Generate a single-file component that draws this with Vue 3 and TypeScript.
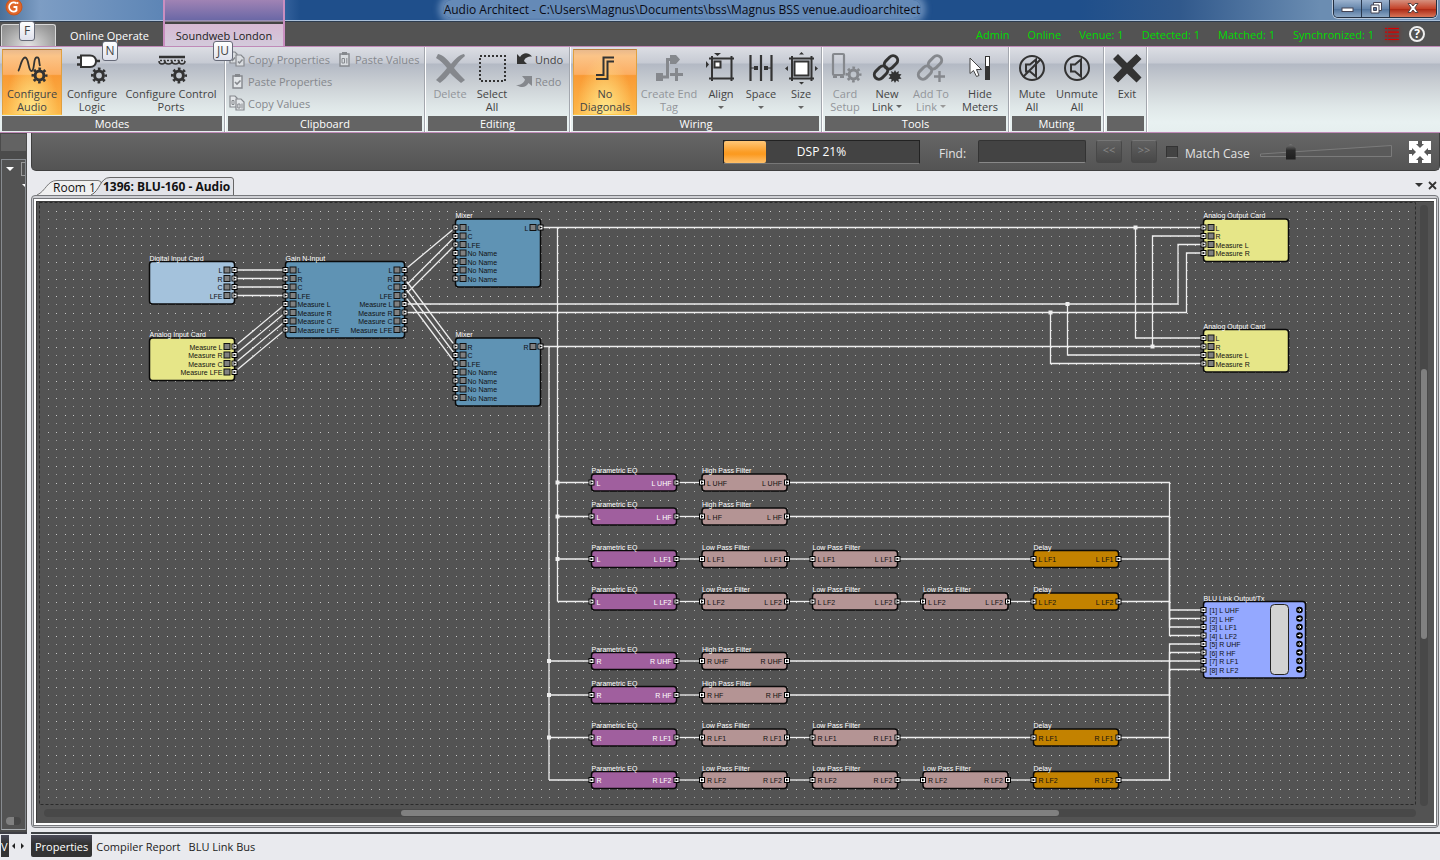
<script setup lang="ts">
import { ref } from 'vue'

interface BigTool { id: string; lines: string[]; w: string; icon: string; off?: boolean; on?: boolean; caret?: 'below' | 'inline' }

const gear = (cx: number, cy: number) =>
  `<g fill="none" stroke="currentColor"><circle cx="${cx}" cy="${cy}" r="4.4" stroke-width="3"/><circle cx="${cx}" cy="${cy}" r="6.7" stroke-width="2.6" stroke-dasharray="2.63 2.63" stroke-dashoffset="1.3"/></g>`
const chain =
  '<g fill="none" stroke="currentColor" stroke-width="3"><rect x="-4.6" y="-7.5" width="9.2" height="15" rx="4.6" transform="translate(20 10.3) rotate(45)"/><rect x="-4.6" y="-7.5" width="9.2" height="15" rx="4.6" transform="translate(10 20.6) rotate(45)"/></g>'
const frame =
  '<path d="M4 6.5H29M4 26.500H29M7 4V29M26.500 4V29" stroke="currentColor" stroke-width="2" fill="none"/>'

const icons: Record<string, string> = {
  audio: '<path d="M2 19C4 18 5 6 9 5.500S12 19 15.500 19 17 6 20.500 5.500 22.500 9 24 14" fill="none" stroke="currentColor" stroke-width="1.800"/>' + gear(23.5, 23.5),
  logic: '<path d="M1 5.500H6M1 12.500H6M18 9H24" stroke="currentColor" stroke-width="2.500"/><path d="M5 3.500H14C22 3.500 22 15 14 15H5Z" fill="#fff" stroke="currentColor" stroke-width="2"/>' + gear(23, 23.5),
  ports: '<path d="M4 5H30" stroke="currentColor" stroke-width="2.500"/><path d="M4 9q0 3 3 3t3-3q0 3 3.500 3t3.500-3q0 3 3.500 3t3.500-3q0 3 3 3t3-3" fill="none" stroke="currentColor" stroke-width="1.500"/><path d="M5 8.500H30" stroke="currentColor" stroke-width="1.500" stroke-dasharray="2 1.500"/>' + gear(24, 23.5),
  del: '<path d="M4 2C9 3 13 7 17 12 21 7 25 3 30 2L31 4C26 8 23 12 20 16 23 20 27 24 31 28L27 31C23 28 19 24 16 21 13 25 10 28 6 31L2 28C6 24 10 20 13 16 10 12 7 9 2 6Z" fill="currentColor"/>',
  select: '<rect x="4" y="4" width="25" height="25" fill="none" stroke="currentColor" stroke-width="2" stroke-dasharray="2 2"/>',
  nodiag: '<path d="M25 5.500H14.500V23H7M25 9.500H18.500V27H7" fill="none" stroke="currentColor" stroke-width="2"/>',
  endtag: '<path d="M3 21H10V29H3ZM17 3H23L27 7.500 23 12H17Z" fill="currentColor"/><path d="M9 25H14.500V7.500H18M17 22.500H30M23.500 16V29" fill="none" stroke="currentColor" stroke-width="3"/>',
  align: frame + '<rect x="9.500" y="9.500" width="6" height="6" fill="#fff" stroke="currentColor" stroke-width="2"/><path d="M9 1H16L12.500 4ZM1 9V16L4 12.500Z" fill="currentColor"/>',
  space: '<path d="M5.500 3V29M16 3V29M26.500 3V29" stroke="currentColor" stroke-width="2.200"/><path d="M9 14H13V18H9ZM19 14H23V18H19Z" fill="currentColor"/><path d="M6 16H9M23 16H26" stroke="currentColor"/>',
  size: frame + '<rect x="9.500" y="9.500" width="14" height="14" fill="#fff" stroke="currentColor" stroke-width="2"/><path d="M14 2.500L16.500 0 19 2.500ZM14 30L16.500 32.500 19 30ZM3 14L0 16.500 3 19ZM30 14L33 16.500 30 19Z" fill="currentColor"/>',
  card: '<rect x="4" y="2" width="11" height="21" rx="1" fill="none" stroke="currentColor" stroke-width="2.200"/><path d="M4 25H8M11 25H15" stroke="currentColor" stroke-width="2"/>' + gear(24.5, 22.5),
  newlink: chain + '<path d="M24 18l1.300 2.500 2.500-1.500-.3 3 3 .3-1.800 2.200 1.800 2.200-3 .3.300 3-2.500-1.500L24 31l-1.300-2.500-2.500 1.500.3-3-3-.3 1.800-2.200-1.800-2.200 3-.3-.3-3 2.500 1.500Z" fill="currentColor"/>',
  addlink: chain + '<path d="M19 24.500H30M24.500 19V30" stroke="currentColor" stroke-width="2.400"/>',
  meters: '<path d="M6 6V21.500L9.500 18.500 12.500 24.500 15 23.500 12.500 17.500H17.500Z" fill="#fff" stroke="#444" stroke-width="1"/><rect x="21.500" y="4.500" width="4" height="23" fill="#333" stroke="#333"/><rect x="22" y="5" width="3" height="9" fill="#fff"/>',
  mute: '<g fill="none" stroke="currentColor" stroke-width="2"><circle cx="16" cy="16" r="12"/><path d="M10 12.500H14L20 7.500V24.500L14 19.500H10ZM25 7L7 25"/></g>',
  unmute: '<g fill="none" stroke="currentColor" stroke-width="2"><circle cx="16" cy="16" r="12"/><path d="M10 12.500H14L20 7.500V24.500L14 19.500H10Z"/></g>',
  exit: '<path d="M2 7L7 2 16 11 25.500 2 30.500 7 21.500 16 30.500 25.500 25.500 30.500 16 21.500 7 30.500 2 25.500 11 16Z" fill="currentColor"/>',
}

const smallIcons: Record<string, string> = {
  copyprops: '<g fill="#d9dce0" stroke="currentColor" stroke-width="1.200"><path d="M1 1H6L8 3V12H1Z"/><path d="M7 4H12L15 7V15H7Z"/></g><path d="M9 10.500L10.500 12 13.500 8.500M2 8L3.500 9.500 6 6.500" fill="none" stroke="currentColor" stroke-width="1.500"/>',
  pasteprops: '<path d="M4 3H13V15H4Z" fill="#e3e6e9" stroke="currentColor" stroke-width="1.400"/><path d="M6 1H11V4H6Z" fill="currentColor"/><path d="M6 9L8 11 11.500 7.500" fill="none" stroke="currentColor" stroke-width="1.600"/>',
  copyvals: '<g fill="#e3e6e9" stroke="currentColor" stroke-width="1.200"><path d="M1 1H6L8 3V12H1Z"/><path d="M7 4H12L15 7V15H7Z"/></g><path d="M3 5.500H5V9.500H3ZM8.800 9H11V13H8.800ZM13 8.500V13.500" fill="none" stroke="currentColor" stroke-width="1"/>',
  pastevals: '<path d="M4 3H13V15H4Z" fill="#d9dce0" stroke="currentColor" stroke-width="1.400"/><path d="M6 1H11V4H6Z" fill="currentColor"/><path d="M6 7.500H8.500V12H6ZM10.800 7V12.500" fill="none" stroke="currentColor" stroke-width="1"/>',
  undo: '<path d="M1 3V13H11L8 10C9 7 11 5.500 16 5.500 12 1 7 1.500 4 6Z" fill="currentColor"/>',
  redo: '<path d="M16 3V13L12.500 10C10 15 5 15 0 12 5 12 8 10 9 6.500L6 3Z" fill="currentColor"/>',
}

const groups: { name: string; tools: BigTool[] }[] = [
  { name: 'Modes', tools: [
    { id: 'ca', lines: ['Configure', 'Audio'], w: 'w60', icon: 'audio', on: true },
    { id: 'cl', lines: ['Configure', 'Logic'], w: 'w60', icon: 'logic' },
    { id: 'cp', lines: ['Configure Control', 'Ports'], w: 'w98', icon: 'ports' } ] },
  { name: 'Clipboard', tools: [] },
  { name: 'Editing', tools: [
    { id: 'de', lines: ['Delete'], w: 'w44', icon: 'del', off: true },
    { id: 'sa', lines: ['Select', 'All'], w: 'w40', icon: 'select' } ] },
  { name: 'Wiring', tools: [
    { id: 'nd', lines: ['No', 'Diagonals'], w: 'w64', icon: 'nodiag', on: true },
    { id: 'ce', lines: ['Create End', 'Tag'], w: 'w64', icon: 'endtag', off: true },
    { id: 'al', lines: ['Align'], w: 'w40', icon: 'align', caret: 'below' },
    { id: 'sp', lines: ['Space'], w: 'w40', icon: 'space', caret: 'below' },
    { id: 'si', lines: ['Size'], w: 'w40', icon: 'size', caret: 'below' } ] },
  { name: 'Tools', tools: [
    { id: 'cs', lines: ['Card', 'Setup'], w: 'w40', icon: 'card', off: true },
    { id: 'nl', lines: ['New', 'Link'], w: 'w44', icon: 'newlink', caret: 'inline' },
    { id: 'at', lines: ['Add To', 'Link'], w: 'w44', icon: 'addlink', off: true, caret: 'inline' },
    { id: 'hm', lines: ['Hide', 'Meters'], w: 'w54', icon: 'meters' } ] },
  { name: 'Muting', tools: [
    { id: 'ma', lines: ['Mute', 'All'], w: 'w40', icon: 'mute' },
    { id: 'ua', lines: ['Unmute', 'All'], w: 'w50', icon: 'unmute' } ] },
  { name: '', tools: [{ id: 'ex', lines: ['Exit'], w: 'w40', icon: 'exit' }] },
]

const status = ['Admin', 'Online', 'Venue: 1', 'Detected: 1', 'Matched: 1', 'Synchronized: 1']
const find = ref('')
const matchCase = ref(false)
const zoomLevel = ref(21)

/* Schematic: every position is a whole number of grid cells. */
const CELL = 8.5
const g = (n: number) => n * CELL

interface Block { t: string; x: number; y: number; w: number; h: number; c: string; ins: string[]; outs: string[]; meters?: boolean; link?: boolean; light?: boolean }

const BLUE = '#5f93b4', YELLOW = '#e6e688', PURPLE = '#a05f9e', ROSE = '#b49494', AMBER = '#c38200'
const four = ['L', 'R', 'C', 'LFE']
const meas = ['Measure L', 'Measure R', 'Measure C', 'Measure LFE']
const none = ['No Name', 'No Name', 'No Name', 'No Name']

const blocks: Block[] = [
  { t: 'Digital Input Card', x: 13, y: 7, w: 10, h: 5, c: '#a4c2dc', ins: [], outs: four, meters: true },
  { t: 'Analog Input Card', x: 13, y: 16, w: 10, h: 5, c: YELLOW, ins: [], outs: meas, meters: true },
  { t: 'Gain N-Input', x: 29, y: 7, w: 14, h: 9, c: BLUE, ins: [...four, ...meas], outs: [...four, ...meas], meters: true },
  { t: 'Mixer', x: 49, y: 2, w: 10, h: 8, c: BLUE, ins: ['L', 'C', 'LFE', ...none], outs: ['L'], meters: true },
  { t: 'Mixer', x: 49, y: 16, w: 10, h: 8, c: BLUE, ins: ['R', 'C', 'LFE', ...none], outs: ['R'], meters: true },
  { t: 'Analog Output Card', x: 137, y: 2, w: 10, h: 5, c: YELLOW, ins: ['L', 'R', 'Measure L', 'Measure R'], outs: [], meters: true },
  { t: 'Analog Output Card', x: 137, y: 15, w: 10, h: 5, c: YELLOW, ins: ['L', 'R', 'Measure L', 'Measure R'], outs: [], meters: true },
  { t: 'BLU Link Output/Tx', x: 137, y: 47, w: 12, h: 9, c: '#94a8ff', outs: [], link: true,
    ins: ['[1] L UHF', '[2] L HF', '[3] L LF1', '[4] L LF2', '[5] R UHF', '[6] R HF', '[7] R LF1', '[8] R LF2'] },
]

const wires: number[][] = []
const joints: number[][] = []

const chains: { side: string; band: string; y: number; cols: [string, number][] }[] = []
const rows: [string, string, number][] = [
  ['L', 'UHF', 33], ['L', 'HF', 37], ['L', 'LF1', 42], ['L', 'LF2', 47],
  ['R', 'UHF', 54], ['R', 'HF', 58], ['R', 'LF1', 63], ['R', 'LF2', 68],
]
rows.forEach(([side, band, y]) => {
  const cols: [string, number][] = [['Parametric EQ', 65]]
  if (band.startsWith('L')) {
    cols.push(['Low Pass Filter', 78], ['Low Pass Filter', 91])
    if (band === 'LF2') cols.push(['Low Pass Filter', 104])
    cols.push(['Delay', 117])
  } else cols.push(['High Pass Filter', 78])
  chains.push({ side, band, y, cols })
})
chains.forEach(({ side, band, y, cols }, i) => {
  const name = `${side} ${band}`
  cols.forEach(([t, x], k) => {
    const eq = k === 0
    blocks.push({ t, x, y: y - 1, w: 10, h: 2, c: eq ? PURPLE : t === 'Delay' ? AMBER : ROSE, ins: [eq ? side : name], outs: [name], light: eq })
    if (k) wires.push([cols[k - 1][1] + 10, y, x, y])
  })
  wires.push([cols[cols.length - 1][1] + 10, y, 133, y, 133, 48 + i, 137, 48 + i])
  const bus = side === 'L' ? 61 : 60
  wires.push([bus, y, 65, y])
  if (band !== 'LF2') joints.push([bus, y])
})
for (let i = 0; i < 4; i++) {
  wires.push([23, 8 + i, 29, 8 + i])
  wires.push([23, 17 + i, 29, 12 + i])
}
wires.push([43, 8, 49, 3], [43, 10, 49, 4], [43, 11, 49, 5], [43, 9, 49, 17], [43, 10, 49, 18], [43, 11, 49, 19])
wires.push([59, 3, 137, 3], [129, 3, 129, 16, 137, 16], [59, 17, 137, 17], [131, 17, 131, 4, 137, 4])
wires.push([43, 12, 134, 12, 134, 5, 137, 5], [121, 12, 121, 18, 137, 18])
wires.push([43, 13, 135, 13, 135, 6, 137, 6], [119, 13, 119, 19, 137, 19])
wires.push([61, 3, 61, 47], [60, 17, 60, 68])
joints.push([129, 3], [131, 17], [121, 12], [119, 13])

const line = (p: number[]) => {
  const out: string[] = []
  for (let i = 0; i < p.length; i += 2) out.push(`${g(p[i])},${g(p[i + 1])}`)
  return out.join(' ')
}
</script>

<template>
  <div class="app">
    <header class="titlebar">
      <svg class="logo" viewBox="0 0 18 18" aria-hidden="true">
        <circle cx="9" cy="8" r="8" fill="#e0662a" stroke="#c9551c" />
        <path d="M11.500 4.500A4.500 4.500 0 1 0 11.500 11.500V8H8.500" fill="none" stroke="#fff" stroke-width="1.800" />
        <circle cx="12.500" cy="4" r="1" fill="#fff" />
      </svg>
      <h1>Audio Architect - C:\Users\Magnus\Documents\bss\Magnus BSS venue.audioarchitect</h1>
      <div class="winbtns">
        <button aria-label="Minimize"><svg viewBox="0 0 16 14"><rect x="2" y="7" width="11" height="3.500" fill="#fff" stroke="#445" /></svg></button>
        <button aria-label="Restore"><svg viewBox="0 0 16 14"><path d="M5.500 1.500H13.500V9.500H5.500Z" fill="#fff" stroke="#445" /><path d="M3 4H11V12H3Z" fill="#fff" stroke="#445" /><path d="M5.500 6.500H8.500V9.500H5.500Z" fill="#5577a0" stroke="#445" /></svg></button>
        <button class="close" aria-label="Close"><svg viewBox="0 0 16 14"><path d="M3 2.500H6L8 5 10 2.500H13L9.800 7 13 11.500H10L8 9 6 11.500H3L6.200 7Z" fill="#fff" stroke="#544" /></svg></button>
      </div>
    </header>

    <nav class="tabs">
      <button class="file" aria-label="File"></button>
      <button class="tab">Online Operate</button>
      <button class="tab ctx">Soundweb London</button>
      <div class="status">
        <span v-for="s in status" :key="s">{{ s }}</span>
        <svg class="list" viewBox="0 0 16 16" aria-hidden="true"><path d="M1 2.500H3M4 2.500H15M1 6.200H3M4 6.200H15M1 10H3M4 10H15M1 13.500H3M4 13.500H15" stroke="#d80000" stroke-width="1.200" /></svg>
        <button class="help" aria-label="Help">?</button>
      </div>
      <kbd class="tip tip-f">F</kbd>
      <kbd class="tip tip-n">N</kbd>
      <kbd class="tip tip-ju">JU</kbd>
    </nav>

    <section class="ribbon">
      <div v-for="grp in groups" :key="grp.name" class="group">
        <div class="tools">
          <button v-for="b in grp.tools" :key="b.id" class="big" :class="[b.w, { on: b.on }]" :disabled="b.off">
            <svg viewBox="0 0 32 32" aria-hidden="true" v-html="icons[b.icon]"></svg>
            <span v-for="(l, i) in b.lines" :key="l" class="ln">{{ l }}<i v-if="b.caret === 'inline' && i === 1" class="caret"></i></span>
            <i v-if="b.caret === 'below'" class="caret below"></i>
          </button>
          <template v-if="grp.name === 'Clipboard'">
            <div class="stack clip">
              <button class="small" disabled><svg viewBox="0 0 16 16" v-html="smallIcons.copyprops"></svg>Copy Properties</button>
              <button class="small" disabled><svg viewBox="0 0 16 16" v-html="smallIcons.pasteprops"></svg>Paste Properties</button>
              <button class="small" disabled><svg viewBox="0 0 16 16" v-html="smallIcons.copyvals"></svg>Copy Values</button>
            </div>
            <div class="stack">
              <button class="small" disabled><svg viewBox="0 0 16 16" v-html="smallIcons.pastevals"></svg>Paste Values</button>
            </div>
          </template>
          <div v-if="grp.name === 'Editing'" class="stack edit">
            <button class="small"><svg viewBox="0 0 16 16" v-html="smallIcons.undo"></svg>Undo</button>
            <button class="small" disabled><svg viewBox="0 0 16 16" v-html="smallIcons.redo"></svg>Redo</button>
          </div>
        </div>
        <h2>{{ grp.name }}</h2>
      </div>
    </section>

    <main class="body">
      <aside class="side">
        <div class="side-head"></div>
        <div class="tree">
          <div class="node"><i class="tri"></i><i class="doc"></i></div>
          <i class="tri sub"></i>
          <div class="knob"></div>
        </div>
      </aside>

      <div class="work">
        <div class="findbar">
          <div class="dsp" role="progressbar" aria-valuenow="21"><div class="fill"></div><span>DSP 21%</span></div>
          <label for="find">Find:</label>
          <input id="find" v-model="find" type="text" class="findbox" />
          <button class="step">&lt;&lt;</button>
          <button class="step">&gt;&gt;</button>
          <input id="mc" v-model="matchCase" type="checkbox" class="check" />
          <label for="mc" class="mc">Match Case</label>
          <div class="slider">
            <svg viewBox="0 0 132 14" aria-hidden="true"><path d="M.5 10L131.500 1.500V12.500H.5Z" fill="#5a5a5a" stroke="#7b7b7b" /></svg>
            <input v-model="zoomLevel" type="range" min="0" max="100" aria-label="Zoom" />
          </div>
          <button class="fit" aria-label="Fit to window">
            <svg viewBox="0 0 22 22"><path d="M0 0H22V22H0Z" fill="#fff" /><path d="M9 0H13V3H15L11 7 7 3H9ZM9 22H13V19H15L11 15 7 19H9ZM0 9V13H3V15L7 11 3 7V9ZM22 9V13H19V15L15 11 19 7V9Z" fill="#585858" /></svg>
          </button>
        </div>

        <div class="doctabs">
          <button class="dt room"><svg viewBox="0 0 66 15" aria-hidden="true"><path d="M0 15C9 11 10 .5 20 .5H61Q64.500 .5 64.500 4V15" fill="#f0f0f0" stroke="#777" /></svg><span>Room 1</span></button>
          <button class="dt cur"><svg viewBox="0 0 144 18" aria-hidden="true"><path d="M0 18C9 14 9 .5 19 .5H140Q142.500 .5 142.500 3V18" fill="#e2e3e8" stroke="#666" /></svg><span>1396: BLU-160 - Audio</span></button>
          <div class="dtend">
            <button aria-label="Tab list"><i class="tri dark"></i></button>
            <button aria-label="Close tab"><svg viewBox="0 0 9 9"><path d="M1 1L8 8M8 1L1 8" stroke="#333" stroke-width="1.800" /></svg></button>
          </div>
        </div>

        <div class="frame">
          <div class="canvas">
            <svg class="plan" width="1378" height="604" role="img" aria-label="Signal flow">
              <defs>
                <pattern id="dots" width="17" height="17" patternUnits="userSpaceOnUse">
                  <path d="M0 0h1v1h-1zM9 0h1v1h-1z" fill="#a4a4a4" />
                  <path d="M0 9h1v1h-1zM9 9h1v1h-1z" fill="#c8c8c8" />
                </pattern>
              </defs>
              <rect x="4" y="4" width="1370" height="596" fill="url(#dots)" />
              <rect x=".5" y=".5" width="1376" height="602" class="edge" />
              <polyline v-for="(w, i) in wires" :key="'w' + i" :points="line(w)" class="wire" />
              <rect v-for="(j, i) in joints" :key="'j' + i" :x="g(j[0]) - 2" :y="g(j[1]) - 2" width="4" height="4" fill="#eee" />
              <g v-for="(b, i) in blocks" :key="'b' + i" :transform="`translate(${g(b.x)} ${g(b.y)})`">
                <rect x="0" y="0" :width="g(b.w)" :height="g(b.h)" rx="3" :fill="b.c" stroke="#0a0a0a" stroke-width="1.500" />
                <text x="0" y="-1" class="cap">{{ b.t }}</text>
                <g v-for="(p, k) in b.ins" :key="'i' + k" :transform="`translate(0 ${g(k + 1)})`">
                  <rect x="-2.500" y="-2.500" width="5" height="5" class="port" />
                  <path d="M-1 -1.500L1.500 0 -1 1.500Z" />
                  <rect v-if="b.meters" x="4.500" y="-3" width="6" height="6" class="meter" />
                  <text :x="b.meters ? 12 : b.link ? 6 : 5" y="3" :class="['lab', { light: b.light }]">{{ p }}</text>
                </g>
                <g v-for="(p, k) in b.outs" :key="'o' + k" :transform="`translate(${g(b.w)} ${g(k + 1)})`">
                  <rect x="-2.500" y="-2.500" width="5" height="5" class="port" />
                  <path d="M-1 -1.500L1.500 0 -1 1.500Z" />
                  <rect v-if="b.meters" x="-10.500" y="-3" width="6" height="6" class="meter" />
                  <text :x="b.meters ? -12 : -5" y="3" text-anchor="end" :class="['lab', { light: b.light }]">{{ p }}</text>
                </g>
                <template v-if="b.link">
                  <rect x="67" y="3" width="18" height="70" rx="4" fill="#d2d2d2" stroke="#222" />
                  <g v-for="k in 8" :key="'c' + k" :transform="`translate(96 ${g(k)})`">
                    <circle r="3.300" />
                    <path d="M-2 0H1M0 -1.500L1.500 0 0 1.500" stroke="#fff" fill="none" />
                  </g>
                </template>
              </g>
            </svg>
            <div class="vbar"><div></div></div>
            <div class="hbar"><div></div></div>
          </div>
        </div>
      </div>
    </main>

    <footer class="foot">
      <div class="left"><button class="v">V</button><i class="al"></i><i class="ar"></i></div>
      <button class="ft cur">Properties</button>
      <button class="ft">Compiler Report</button>
      <button class="ft">BLU Link Bus</button>
    </footer>
  </div>
</template>

<style>
html, body { margin: 0; background: #e9eaee; }
</style>

<style scoped>
* { box-sizing: border-box; }
.app { min-height: 100vh; display: flex; flex-direction: column; background: #e9eaee; font-family: "Open Sans", "Noto Sans", sans-serif; font-size: 11px; overflow: hidden; }
button { font: inherit; color: inherit; border: 0; padding: 0; margin: 0; background: none; }
i { display: block; }

.titlebar { position: relative; height: 22px; display: flex; align-items: flex-start; justify-content: space-between; background: linear-gradient(90deg, #4a7099 0, #7d9dc4 40px, #5e86b6 160px, #3a66a0 280px, #1f4f8b 300px, #1f4f8b 1080px, #31598c 1180px, #6b8db2 1320px); border-bottom: 1px solid #2e3c4e; box-shadow: inset 0 -1px #a9c0da; }
.logo { width: 18px; height: 18px; margin: -1px 0 0 5px; }
.titlebar h1 { margin: 0; font-size: 12px; font-weight: 400; line-height: 19px; color: #0a0a14; padding: 0; border-radius: 8px; background: rgba(125, 158, 198, .75); box-shadow: 0 0 6px 5px rgba(125, 158, 198, .75); position: absolute; left: 50%; transform: translateX(-50%); height: 18px; margin-left: -38px; white-space: nowrap; clip-path: inset(0 -12px -2px -12px); }
.winbtns { display: flex; margin-right: 3px; height: 18px; border: 1px solid #222e3f; border-top: 0; border-radius: 0 0 5px 5px; overflow: hidden; box-shadow: 0 0 0 1px #b9c9dc; }
.winbtns button { width: 28px; background: linear-gradient(#9cb3cf, #6787ac 50%, #4f729b 51%, #8ba6c4); border-right: 1px solid #2a3a50; display: flex; justify-content: center; }
.winbtns button.close { width: 46px; border: 0; background: linear-gradient(#d6907e, #c4432a 50%, #a92410 51%, #d77457); }
.winbtns svg { width: 16px; height: 14px; margin-top: 1px; }

.tabs { position: relative; display: flex; height: 24px; background: #535353; color: #fff; z-index: 2; }
.file { width: 55px; margin: 2px 0 0 1px; border: 1px solid #d8d8d8; border-bottom: 0; border-radius: 3px 3px 0 0; background: radial-gradient(ellipse at 50% 100%, #e4e4e4, #a0a0a0 70%, #8a8a8a); color: #fff; }
.tab { width: 107px; height: 24px; padding-top: 2px; }
.tab.ctx { position: relative; width: 122px; margin-top: -22px; height: 46px; padding-top: 24px; color: #1b1b1b; border: 1px solid #c98ec0; border-width: 0 2px; background: linear-gradient(#a083b4 0, #6b68a6 20px, #c6b4d0 21px, #444 22px, #444 24px, #d7b9d3 24px, #d3cadb 46px); }
.status { margin-left: auto; display: flex; align-items: center; gap: 18px; color: #00dc00; padding: 0 15px 0 0; }
.list { width: 16px; height: 16px; margin: 0 -9px 0 -8px; filter: drop-shadow(0 0 2px #a00); }
.help { width: 16px; height: 16px; border: 2px solid #eee; border-radius: 50%; color: #fff; font-weight: 700; font-size: 12px; line-height: 12px; }
.tip { position: absolute; width: 16px; height: 20px; border: 1px solid #666a78; border-radius: 3px; background: linear-gradient(#fff, #dfe1ec); color: #444; text-align: center; font: inherit; font-size: 12px; line-height: 18px; }
.tip-f { left: 19px; top: -1px; }
.tip-n { left: 102px; top: 19px; }
.tip-ju { left: 213px; top: 19px; width: 20px; }

.ribbon { display: grid; grid-template-columns: 226px 200px 145px 252px 187px 95px 43px; border: 1px solid #c08ab8; border-width: 1px 0; background: linear-gradient(#dcdee4 0, #c6cad3 16px, #b3b9c4 17px, #c9ced3 36px, #dfe7e8 60px, #e8f1f1 75px, #e6efef); color: #333; height: 87px; }
.group { display: flex; flex-direction: column; padding: 2px 2px 1px 2px; border-right: 1px solid #fff; box-shadow: inset -1px 0 #a3a7ae; }
.tools { display: flex; height: 67px; color: #333; }
.group h2 { margin: 0; height: 15px; background: #646464; color: #fff; font-size: 11px; font-weight: 400; line-height: 15px; text-align: center; margin-right: 1px; }
.big { display: flex; flex-direction: column; align-items: center; padding-top: 2px; height: 66px; color: #333; border: 1px solid transparent; flex: none; }
.big svg { width: 32px; height: 32px; overflow: visible; margin-bottom: 3px; flex: none; }
.big .ln { display: flex; align-items: center; gap: 3px; line-height: 13px; white-space: nowrap; color: #444; }
.big:disabled, .small:disabled { color: #85888d; }
.big:disabled .ln { color: #92959a; }
.big.on { border-color: #b77d3c #e0a040 #ffc94a; background: radial-gradient(ellipse at 50% 100%, #ffe98c, rgba(255, 210, 90, 0) 65%), linear-gradient(#e9b98c 0, #fbc488 6px, #fcae62 38%, #f99a35 40%, #fdb84a 100%); }
.w40 { width: 40px; } .w44 { width: 44px; } .w50 { width: 50px; } .w54 { width: 54px; } .w60 { width: 60px; } .w64 { width: 64px; } .w98 { width: 98px; }
.caret { border: 3px solid transparent; border-top-color: #666; border-bottom: 0; }
.caret.below { margin-top: 6px; }
.big:disabled .caret { border-top-color: #999; }
.stack { display: flex; flex-direction: column; align-items: flex-start; margin-top: -1px; }
.stack.clip { width: 108px; padding-left: 1px; }
.stack.edit { padding-left: 4px; }
.small { display: flex; align-items: center; gap: 3px; height: 22px; white-space: nowrap; color: #444; }
.small svg { width: 16px; height: 16px; color: #333; }
.small:disabled svg { color: #85888d; }

.body { flex: 1; display: flex; gap: 4px; min-height: 0; }
.side { width: 27px; display: flex; flex-direction: column; background: #4b4b4b; padding: 1px; border-bottom: 2px solid #3f3f45; }
.side-head { height: 17px; background: #636363; }
.tree { position: relative; flex: 1; margin-top: 8px; border: 1px solid #878b90; border-bottom-color: #a8acb0; background: #535353; overflow: hidden; margin-bottom: 1px; }
.node { display: flex; gap: 7px; padding: 2px 0 0 4px; }
.tri { width: 0; height: 0; border: 4px solid transparent; border-top-color: #fff; border-bottom: 0; margin-top: 5px; }
.tri.sub { margin: 8px 0 0 20px; }
.doc { width: 10px; height: 14px; border: 1px solid #999; flex: none; }
.knob { position: absolute; left: 4px; bottom: 4px; width: 15px; height: 8px; border-radius: 4px; background: linear-gradient(90deg, #808080 8px, #474747 8px); }

.work { flex: 1; min-width: 0; display: flex; flex-direction: column; border-bottom: 2px solid #3f4246; }
.findbar { height: 38px; display: flex; align-items: center; justify-content: flex-end; padding: 0 8px 0 0; border-radius: 0 0 5px 5px; background: linear-gradient(#666, #545454); border: 1px solid #3f3f3f; border-top: 0; color: #e2e2e2; font-size: 12px; }
.dsp { position: relative; width: 197px; height: 24px; margin-right: 19px; background: #434343; border: 1px solid #222; border-bottom-color: #777; color: #fff; text-align: center; line-height: 22px; }
.dsp .fill { position: absolute; left: 0; top: 0; bottom: 0; width: 21.5%; border-radius: 2px; background: linear-gradient(#ffc778, #fb9d26 50%, #fb9a20 60%, #ffc06a); }
.dsp span { position: relative; }
.findbar label { width: 39px; font-size: 12px; padding-top: 3px; }
.findbox { width: 108px; height: 23px; border: 1px solid #333; border-bottom-color: #888; border-radius: 2px; background: #434343; color: #fff; font: inherit; padding: 0 4px; margin-right: 10px; }
.step { width: 26px; height: 23px; margin-right: 9px; border: 1px solid #484848; border-top-color: #777; border-radius: 3px; background: linear-gradient(#606060, #484848); color: #888; font-size: 11px; line-height: 16px; padding-bottom: 4px; }
.check { appearance: none; width: 12px; height: 12px; margin: 0 7px 0 0; background: #434343; border: 1px solid #333; border-bottom-color: #888; }
.findbar label.mc { width: 75px; white-space: nowrap; }
.slider { position: relative; width: 132px; height: 16px; margin-right: 17px; }
.slider svg { position: absolute; left: 0; top: 0; width: 132px; height: 14px; }
.slider input { position: absolute; left: 0; top: 0; width: 132px; height: 16px; margin: 0; appearance: none; background: none; }
.slider input::-webkit-slider-thumb { appearance: none; width: 10px; height: 16px; background: linear-gradient(#777, #2b2b2b 40%, #1e1e1e); clip-path: polygon(0 30%, 50% 0, 100% 30%, 100% 100%, 0 100%); }
.fit, .fit svg { display: block; width: 22px; height: 22px; }

.doctabs { display: flex; align-items: flex-end; height: 24px; padding-left: 6px; font-size: 12px; color: #111; }
.dt { position: relative; display: flex; align-items: center; white-space: nowrap; }
.dt svg { position: absolute; left: 0; top: 0; width: 100%; height: 100%; }
.dt span { position: relative; }
.room { width: 66px; height: 15px; padding-left: 16px; }
.dt.cur { width: 144px; height: 18px; margin-left: -12px; padding-left: 12px; font-weight: 700; z-index: 1; }
.dtend { margin-left: auto; display: flex; gap: 5px; height: 20px; padding-right: 3px; align-items: center; }
.tri.dark { border-top-color: #333; margin: 0; }
.dtend svg { display: block; width: 9px; height: 9px; }

.frame { flex: 1; min-height: 0; display: flex; border: 1px solid #77797d; border-radius: 4px; padding: 3px 2px 2px; background: #cfd0d4; margin: 0 1px 4px 0; }
.canvas { position: relative; flex: 1; min-width: 0; border: 2px solid #fff; outline: 1px solid #77797d; background: #535353; overflow: hidden; padding: 1px 0 0 3px; box-shadow: inset 1px 1px #3a3a3a; }
.plan { display: block; font-family: "Liberation Sans", Arial, sans-serif; font-size: 7px; }
.edge { fill: none; stroke: #2b2b2b; stroke-dasharray: 3 2; }
.wire { fill: none; stroke: #eee; stroke-width: 1.300; }
.cap { fill: #fff; }
.lab { fill: #111; }
.lab.light { fill: #fff; }
.port { fill: #fff; stroke: #000; stroke-width: 1; }
.meter { fill: #808080; stroke: #111; stroke-width: 1; }
.vbar { position: absolute; top: 4px; right: 6px; bottom: 17px; width: 8px; border-radius: 4px; background: #484848; }
.vbar div { width: 6px; height: 45%; margin: 164px 1px 0; border-radius: 3px; background: #808080; }
.hbar { position: absolute; left: 8px; right: 18px; bottom: 6px; height: 8px; border-radius: 4px; background: #484848; }
.hbar div { height: 6px; width: 48%; margin: 1px 0 0 26%; border-radius: 3px; background: #808080; }
.vbar, .hbar { display: flex; }

.foot { display: flex; height: 26px; padding-top: 1px; align-items: flex-start; font-size: 11px; color: #222; }
.left { display: flex; width: 31px; align-items: center; height: 22px; }
.v { width: 8px; height: 22px; margin-left: 1px; overflow: hidden; background: linear-gradient(#4a4a58, #333 40%); color: #fff; text-align: left; }
.al, .ar { width: 0; height: 0; border: 3px solid transparent; }
.al { border-right-color: #222; border-left: 0; margin-left: 3px; }
.ar { border-left-color: #222; border-right: 0; margin-left: 6px; }
.ft { height: 22px; padding: 0 4px; white-space: nowrap; }
.ft.cur { background: linear-gradient(#4a4a58, #333 40%); color: #fff; border-radius: 0 0 2px 2px; }
</style>
